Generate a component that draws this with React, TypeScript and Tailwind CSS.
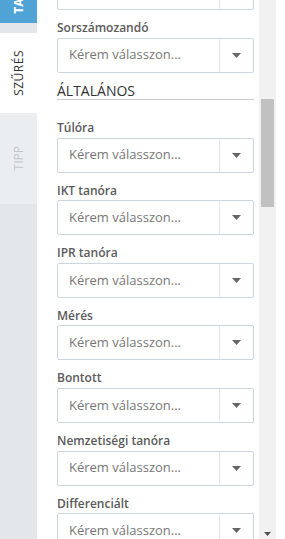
import React from "react";

const font = { fontFamily: "'Open Sans', 'Liberation Sans', sans-serif" };

function Caret() {
  return (
    <svg width="9" height="5" viewBox="0 0 9 5">
      <polygon points="0,0 9,0 4.5,5" fill="#666666" />
    </svg>
  );
}

function SelectBox({ className = "" }: { className?: string }) {
  return (
    <div className={`flex h-[35px] w-[197px] shrink-0 items-stretch rounded-[2px] border border-[#cdd5de] bg-white ${className}`}>
      <div className="flex flex-1 items-center pl-[11px] text-[13px] text-[#777777]">Kérem válasszon...</div>
      <div className="flex w-[34px] items-center justify-center border-l border-[#e6e6e6]">
        <Caret />
      </div>
    </div>
  );
}

function Field({ label }: { label: string }) {
  return (
    <div className="mt-[10px] flex shrink-0 flex-col">
      <div className="mb-[1.6px] text-[12px] font-semibold leading-[16px] text-[#5a5a5a]">{label}</div>
      <SelectBox />
    </div>
  );
}

export default function App() {
  const fields = ["Túlóra", "IKT tanóra", "IPR tanóra", "Mérés", "Bontott", "Nemzetiségi tanóra", "Differenciált"];
  return (
    <div className="flex h-[539px] w-[285px] overflow-hidden bg-white" style={font}>
      <div className="flex w-[37px] shrink-0 flex-col bg-[#e3e7ea]">
        <div className="flex h-[23px] items-end justify-center overflow-hidden bg-[#4fa3d5] pb-[9px]">
          <span className="rotate-180 text-[12px] font-bold leading-[14px] text-white [writing-mode:vertical-rl]">TANÓRA</span>
        </div>
        <div className="mt-[10px] flex h-[80px] items-center justify-center bg-white">
          <span className="rotate-180 text-[12px] leading-[14px] tracking-[0.5px] text-[#333333] [writing-mode:vertical-rl]">SZŰRÉS</span>
        </div>
        <div className="flex h-[91px] items-center justify-center bg-[#ebeef0]">
          <span className="rotate-180 text-[12px] leading-[14px] text-[#c2c7cc] [writing-mode:vertical-rl]">TIPP</span>
        </div>
      </div>
      <div className="flex w-[222px] shrink-0 flex-col overflow-hidden pl-[20px]">
        <SelectBox className="mt-[-25px]" />
        <Field label="Sorszámozandó" />
        <div className="mt-[10px] mb-[10.5px] w-[197px] shrink-0 border-b border-[#cccccc] text-[14px] leading-[16px] text-[#333333]">ÁLTALÁNOS</div>
        {fields.map((f) => (
          <Field key={f} label={f} />
        ))}
      </div>
      <div className="relative w-[17px] shrink-0 bg-[#f1f1f1]">
        <div className="absolute left-[2px] top-[99px] h-[108px] w-[13px] bg-[#c1c1c1]" />
        <div className="absolute bottom-[3px] left-[5px]">
          <svg width="7" height="4" viewBox="0 0 7 4">
            <polygon points="0,0 7,0 3.5,4" fill="#505050" />
          </svg>
        </div>
      </div>
      <div className="flex-1 bg-white" />
    </div>
  );
}
